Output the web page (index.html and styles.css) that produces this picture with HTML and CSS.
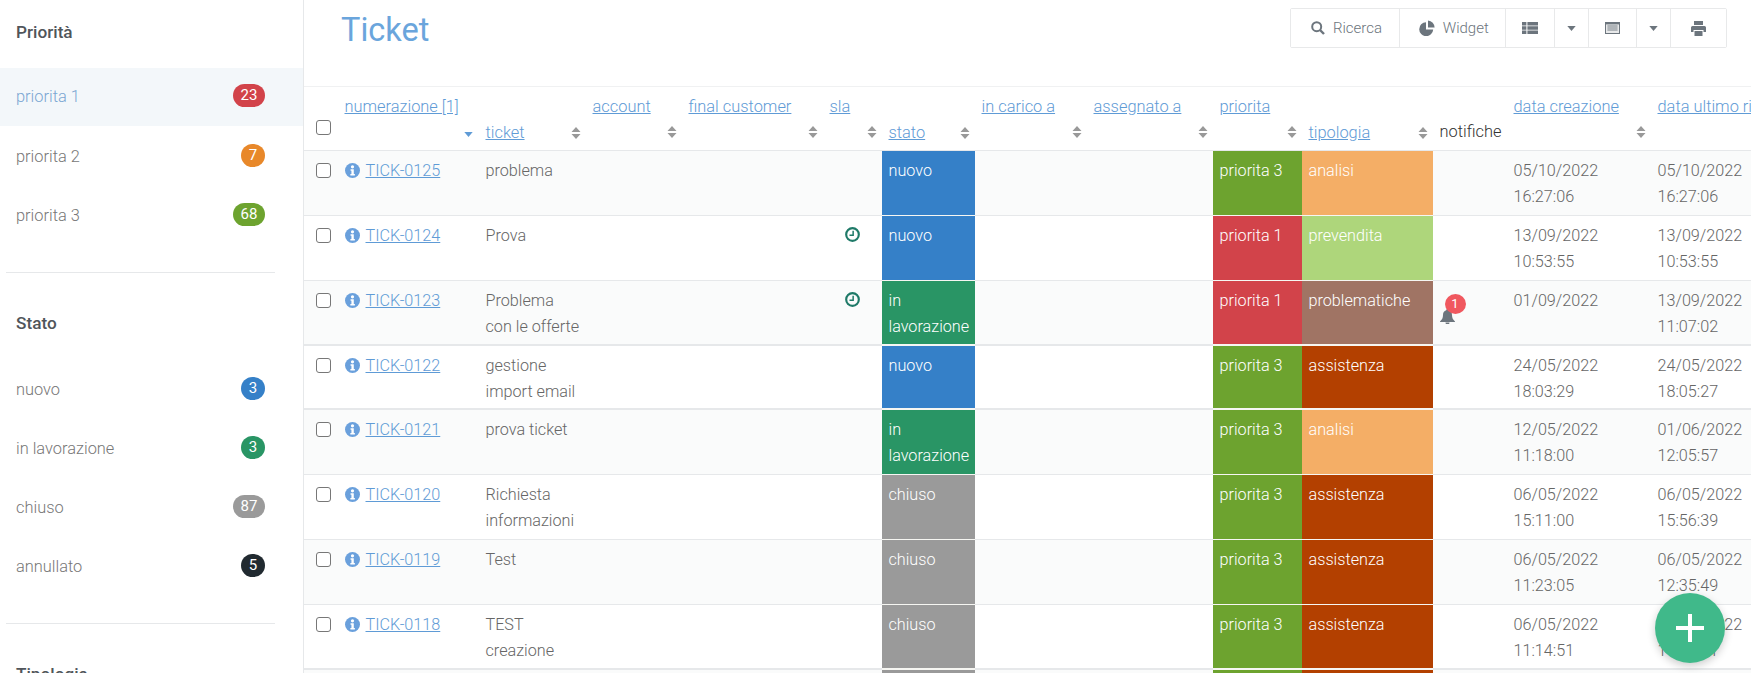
FILE: index.html
```html
<!DOCTYPE html>
<html lang="it">

<head>
    <meta charset="utf-8">
    <meta name="viewport" content="width=device-width, initial-scale=1.0">
    <title>Ticket</title>
    <link rel="stylesheet" href="styles.css">
</head>

<body>

    <!-- icone -->
    <svg class="nascosto" aria-hidden="true">
        <symbol id="i-info" viewBox="0 0 14 14">
            <circle cx="7" cy="7" r="7" fill="currentColor" />
            <circle cx="7" cy="3.6" r="1.5" fill="#fff" />
            <path d="M5.2 5.9h3v4.3h1v1.4H5v-1.4h1V7.3h-.8z" fill="#fff" />
        </symbol>
        <symbol id="i-sort" viewBox="0 0 10 12">
            <path d="M5 0l4.5 5H.5zM5 12L.5 7h9z" fill="currentColor" />
        </symbol>
        <symbol id="i-caret" viewBox="0 0 10 6">
            <path d="M0 0h10L5 6z" fill="currentColor" />
        </symbol>
        <symbol id="i-clock" viewBox="0 0 14 14">
            <circle cx="7" cy="7" r="5.9" fill="none" stroke="currentColor" stroke-width="2" />
            <path d="M7.6 3.6v4.2H4.2" fill="none" stroke="currentColor" stroke-width="1.4" />
        </symbol>
    </svg>

    <aside class="sidebar">
        <section class="gruppo">
            <h3>Priorità</h3>
            <a class="voce attiva" href="#">priorita 1 <span class="badge rosso">23</span></a>
            <a class="voce" href="#">priorita 2 <span class="badge arancio">7</span></a>
            <a class="voce" href="#">priorita 3 <span class="badge verde">68</span></a>
        </section>
        <section class="gruppo">
            <h3>Stato</h3>
            <a class="voce" href="#">nuovo <span class="badge blu">3</span></a>
            <a class="voce" href="#">in lavorazione <span class="badge smeraldo">3</span></a>
            <a class="voce" href="#">chiuso <span class="badge grigio">87</span></a>
            <a class="voce" href="#">annullato <span class="badge nero">5</span></a>
        </section>
        <section class="gruppo">
            <h3>Tipologia</h3>
        </section>
    </aside>

    <main class="contenuto">
        <header class="testata">
            <h1>Ticket</h1>
            <div class="toolbar">
                <button class="btn b-ricerca">
                    <svg width="14" height="14" viewBox="0 0 14 14">
                        <circle cx="5.7" cy="5.7" r="4.5" fill="none" stroke="currentColor" stroke-width="2" />
                        <path d="M9 9l4 4" stroke="currentColor" stroke-width="2.4" />
                    </svg>
                    Ricerca
                </button>
                <button class="btn b-widget">
                    <svg width="16" height="16" viewBox="0 0 16 16">
                        <path d="M7 2.2v7.4h7.2A7 7 0 1 1 7 2.2z" fill="currentColor" />
                        <path d="M9 .6a7 7 0 0 1 6.6 7H9z" fill="currentColor" />
                    </svg>
                    Widget
                </button>
                <button class="btn b-icona">
                    <svg width="16" height="12" viewBox="0 0 16 12" fill="currentColor">
                        <path d="M0 0h4.4v3.4H0zM5.4 0H16v3.4H5.4zM0 4.3h4.4v3.4H0zM5.4 4.3H16v3.4H5.4zM0 8.6h4.4V12H0zM5.4 8.6H16V12H5.4z" />
                    </svg>
                </button>
                <button class="btn b-caret">
                    <svg width="9" height="5"><use href="#i-caret" /></svg>
                </button>
                <button class="btn b-icona">
                    <svg width="15" height="12" viewBox="0 0 15 12">
                        <path d="M0 0h15v12H0z" fill="currentColor" />
                        <path d="M1 2.4h13V11H1z" fill="#e8e9ea" />
                        <path d="M2.4 4h10.2M2.4 6h10.2M2.4 8h10.2" stroke="currentColor" stroke-width=".9" />
                    </svg>
                </button>
                <button class="btn b-caret">
                    <svg width="9" height="5"><use href="#i-caret" /></svg>
                </button>
                <button class="btn b-stampa">
                    <svg width="15" height="15" viewBox="0 0 15 15" fill="currentColor">
                        <path d="M3 0h9v4H3zM1.500 5h12A1.500 1.500 0 0 1 15 6.500V11h-2.500V9h-10v2H0V6.500A1.500 1.500 0 0 1 1.500 5zM3.500 10h8v5h-8z" />
                    </svg>
                </button>
            </div>
        </header>

        <table class="tabella">
            <colgroup>
                <col class="c-spunta">
                <col class="c-num">
                <col class="c-ticket">
                <col class="c-account">
                <col class="c-final">
                <col class="c-sla">
                <col class="c-stato">
                <col class="c-carico">
                <col class="c-assegnato">
                <col class="c-priorita">
                <col class="c-tipologia">
                <col class="c-notifiche">
                <col class="c-creazione">
                <col class="c-ultimo">
            </colgroup>
            <thead>
                <tr>
                    <th><input class="spunta" type="checkbox"></th>
                    <th><a href="#">numerazione [1]</a>
                        <div class="riga-sort"><svg class="caret-attivo" width="9" height="5"><use href="#i-caret" /></svg></div>
                    </th>
                    <th class="bassa"><div class="riga-sort tra"><a href="#">ticket</a><svg class="sort" width="10" height="12"><use href="#i-sort" /></svg></div></th>
                    <th><a href="#">account</a>
                        <div class="riga-sort"><svg class="sort" width="10" height="12"><use href="#i-sort" /></svg></div>
                    </th>
                    <th><a href="#">final customer</a>
                        <div class="riga-sort"><svg class="sort" width="10" height="12"><use href="#i-sort" /></svg></div>
                    </th>
                    <th><a href="#">sla</a>
                        <div class="riga-sort"><svg class="sort" width="10" height="12"><use href="#i-sort" /></svg></div>
                    </th>
                    <th class="bassa"><div class="riga-sort tra"><a href="#">stato</a><svg class="sort" width="10" height="12"><use href="#i-sort" /></svg></div></th>
                    <th><a href="#">in carico a</a>
                        <div class="riga-sort"><svg class="sort" width="10" height="12"><use href="#i-sort" /></svg></div>
                    </th>
                    <th><a href="#">assegnato a</a>
                        <div class="riga-sort"><svg class="sort" width="10" height="12"><use href="#i-sort" /></svg></div>
                    </th>
                    <th><a href="#">priorita</a>
                        <div class="riga-sort"><svg class="sort" width="10" height="12"><use href="#i-sort" /></svg></div>
                    </th>
                    <th class="bassa"><div class="riga-sort tra"><a href="#">tipologia</a><svg class="sort" width="10" height="12"><use href="#i-sort" /></svg></div></th>
                    <th class="bassa notifiche">notifiche</th>
                    <th><a href="#">data creazione</a>
                        <div class="riga-sort"><svg class="sort" width="10" height="12"><use href="#i-sort" /></svg></div>
                    </th>
                    <th><a href="#">data ultimo riscontro</a></th>
                </tr>
            </thead>
            <tbody>
                <tr class="dispari">
                    <td><input class="spunta" type="checkbox"></td>
                    <td><svg class="info" width="15" height="15"><use href="#i-info" /></svg><a href="#">TICK-0125</a></td>
                    <td>problema</td>
                    <td></td>
                    <td></td>
                    <td></td>
                    <td class="cella blu">nuovo</td>
                    <td></td>
                    <td></td>
                    <td class="cella verde">priorita 3</td>
                    <td class="cella analisi">analisi</td>
                    <td></td>
                    <td>05/10/2022<br>16:27:06</td>
                    <td>05/10/2022<br>16:27:06</td>
                </tr>
                <tr>
                    <td><input class="spunta" type="checkbox"></td>
                    <td><svg class="info" width="15" height="15"><use href="#i-info" /></svg><a href="#">TICK-0124</a></td>
                    <td>Prova</td>
                    <td></td>
                    <td></td>
                    <td class="sla"><svg class="orologio" width="15" height="15"><use href="#i-clock" /></svg></td>
                    <td class="cella blu">nuovo</td>
                    <td></td>
                    <td></td>
                    <td class="cella rosso">priorita 1</td>
                    <td class="cella prevendita">prevendita</td>
                    <td></td>
                    <td>13/09/2022<br>10:53:55</td>
                    <td>13/09/2022<br>10:53:55</td>
                </tr>
                <tr class="dispari spessa">
                    <td><input class="spunta" type="checkbox"></td>
                    <td><svg class="info" width="15" height="15"><use href="#i-info" /></svg><a href="#">TICK-0123</a></td>
                    <td>Problema<br>con le offerte</td>
                    <td></td>
                    <td></td>
                    <td class="sla"><svg class="orologio" width="15" height="15"><use href="#i-clock" /></svg></td>
                    <td class="cella smeraldo">in lavorazione</td>
                    <td></td>
                    <td></td>
                    <td class="cella rosso">priorita 1</td>
                    <td class="cella problematiche">problematiche</td>
                    <td>
                        <span class="campana">
                            <svg width="15" height="15" viewBox="0 0 15 15" fill="currentColor">
                                <path d="M7.500 0a1.300 1.300 0 0 1 1.300 1.300C11 1.900 12 3.700 12 6c0 3 1 4.500 3 6.500V13H0v-.5C2 10.500 3 9 3 6c0-2.300 1-4.100 3.200-4.700A1.300 1.300 0 0 1 7.500 0zM5.500 13.600h4a2 2 0 0 1-4 0z" />
                            </svg>
                            <span class="pallino">1</span>
                        </span>
                    </td>
                    <td>01/09/2022</td>
                    <td>13/09/2022<br>11:07:02</td>
                </tr>
                <tr class="spessa corta">
                    <td><input class="spunta" type="checkbox"></td>
                    <td><svg class="info" width="15" height="15"><use href="#i-info" /></svg><a href="#">TICK-0122</a></td>
                    <td>gestione import email</td>
                    <td></td>
                    <td></td>
                    <td></td>
                    <td class="cella blu">nuovo</td>
                    <td></td>
                    <td></td>
                    <td class="cella verde">priorita 3</td>
                    <td class="cella assistenza">assistenza</td>
                    <td></td>
                    <td>24/05/2022<br>18:03:29</td>
                    <td>24/05/2022<br>18:05:27</td>
                </tr>
                <tr class="dispari">
                    <td><input class="spunta" type="checkbox"></td>
                    <td><svg class="info" width="15" height="15"><use href="#i-info" /></svg><a href="#">TICK-0121</a></td>
                    <td>prova ticket</td>
                    <td></td>
                    <td></td>
                    <td></td>
                    <td class="cella smeraldo">in lavorazione</td>
                    <td></td>
                    <td></td>
                    <td class="cella verde">priorita 3</td>
                    <td class="cella analisi">analisi</td>
                    <td></td>
                    <td>12/05/2022<br>11:18:00</td>
                    <td>01/06/2022<br>12:05:57</td>
                </tr>
                <tr>
                    <td><input class="spunta" type="checkbox"></td>
                    <td><svg class="info" width="15" height="15"><use href="#i-info" /></svg><a href="#">TICK-0120</a></td>
                    <td>Richiesta informazioni</td>
                    <td></td>
                    <td></td>
                    <td></td>
                    <td class="cella grigio">chiuso</td>
                    <td></td>
                    <td></td>
                    <td class="cella verde">priorita 3</td>
                    <td class="cella assistenza">assistenza</td>
                    <td></td>
                    <td>06/05/2022<br>15:11:00</td>
                    <td>06/05/2022<br>15:56:39</td>
                </tr>
                <tr class="dispari">
                    <td><input class="spunta" type="checkbox"></td>
                    <td><svg class="info" width="15" height="15"><use href="#i-info" /></svg><a href="#">TICK-0119</a></td>
                    <td>Test</td>
                    <td></td>
                    <td></td>
                    <td></td>
                    <td class="cella grigio">chiuso</td>
                    <td></td>
                    <td></td>
                    <td class="cella verde">priorita 3</td>
                    <td class="cella assistenza">assistenza</td>
                    <td></td>
                    <td>06/05/2022<br>11:23:05</td>
                    <td>06/05/2022<br>12:35:49</td>
                </tr>
                <tr class="spessa">
                    <td><input class="spunta" type="checkbox"></td>
                    <td><svg class="info" width="15" height="15"><use href="#i-info" /></svg><a href="#">TICK-0118</a></td>
                    <td>TEST creazione</td>
                    <td></td>
                    <td></td>
                    <td></td>
                    <td class="cella grigio">chiuso</td>
                    <td></td>
                    <td></td>
                    <td class="cella verde">priorita 3</td>
                    <td class="cella assistenza">assistenza</td>
                    <td></td>
                    <td>06/05/2022<br>11:14:51</td>
                    <td>06/05/2022<br>11:14:51</td>
                </tr>
                <tr class="dispari">
                    <td></td>
                    <td></td>
                    <td></td>
                    <td></td>
                    <td></td>
                    <td></td>
                    <td class="cella grigio"></td>
                    <td></td>
                    <td></td>
                    <td class="cella verde"></td>
                    <td class="cella assistenza"></td>
                    <td></td>
                    <td></td>
                    <td></td>
                </tr>
            </tbody>
        </table>
    </main>

    <button class="fab" aria-label="Nuovo ticket">
        <svg width="28" height="28" viewBox="0 0 28 28">
            <path d="M14 0v28M0 14h28" stroke="#fff" stroke-width="4" />
        </svg>
    </button>

</body>

</html>
```

FILE: styles.css
```css
body {
    margin: 0;
    height: 673px;
    overflow: hidden;
    display: flex;
    background-color: #fff;
    font-family: "Roboto", "Liberation Sans", sans-serif;
    font-size: 16.2px;
    font-weight: 300;
    line-height: 25.5px;
    color: #666;
}

a {
    color: #5f9bd6;
}

.nascosto {
    display: none;
}

/******************** sidebar ********************/

.sidebar {
    flex: 0 0 303px;
    height: 673px;
    overflow: hidden;
    border-right: 1px solid #e6e8ea;
}

.gruppo {
    margin: 0 28px 0 6px;
    padding: 37px 0 26.500px;
    border-bottom: 1px solid #e6e8ea;
}

.gruppo:first-child {
    padding-top: 19px;
}

.gruppo h3 {
    margin: 0 0 24px 10px;
    font-size: 17.200px;
    font-weight: 500;
    line-height: 26px;
    color: #50555a;
}

.gruppo:first-child h3 {
    margin-bottom: 23px;
}

.voce {
    display: flex;
    align-items: center;
    justify-content: space-between;
    height: 59px;
    margin: 0 -28px 0 -6px;
    padding: 0 38px 0 16px;
    font-size: 16.400px;
    color: #777;
    text-decoration: none;
}

.voce.attiva {
    height: 58px;
    margin-bottom: 1.500px;
    background-color: #f3f7fa;
    color: #7aa6d2;
}

.badge {
    display: block;
    min-width: 24px;
    height: 23px;
    margin-bottom: 3px;
    padding: 0 4px;
    box-sizing: border-box;
    border-radius: 12px;
    font-size: 15px;
    font-weight: 400;
    line-height: 22px;
    text-align: center;
    color: #fff;
}

.badge.rosso,
.badge.verde,
.badge.grigio {
    min-width: 32px;
}

.badge.arancio {
    background-color: #e8882a;
}

.badge.nero {
    background-color: #212a30;
}

.blu {
    background-color: #3580c8;
}

.smeraldo {
    background-color: #299565;
}

.grigio {
    background-color: #9a9a9a;
}

.verde {
    background-color: #6da32f;
}

.rosso {
    background-color: #d2434a;
}

.analisi {
    background-color: #f4ae66;
}

.prevendita {
    background-color: #aed67b;
}

.problematiche {
    background-color: #a07464;
}

.assistenza {
    background-color: #b34000;
}

/******************** testata ********************/

.contenuto {
    flex: 1 1 auto;
    min-width: 0;
    overflow: hidden;
}

.testata {
    display: flex;
    justify-content: space-between;
    align-items: flex-start;
    height: 87px;
    padding: 8px 24px 0 37px;
    box-sizing: border-box;
    border-bottom: 1px solid #f0f1f2;
}

.testata h1 {
    margin: 2px 0 0;
    font-size: 32.500px;
    font-weight: 400;
    line-height: 40px;
    color: #6aa5dc;
}

.toolbar {
    display: flex;
    height: 40px;
    box-sizing: border-box;
    border: 1px solid #e8e9ea;
    border-radius: 2px;
}

.btn {
    display: flex;
    align-items: center;
    justify-content: center;
    gap: 8px;
    padding: 0;
    border: 0;
    border-right: 1px solid #e8e9ea;
    background-color: #fff;
    font-family: inherit;
    font-size: 15px;
    font-weight: 300;
    color: #6c757d;
}

.btn:last-child {
    border-right: 0;
}

.b-ricerca {
    width: 109px;
    padding-left: 4px;
}

.b-widget {
    width: 106.500px;
    padding-left: 3px;
}

.b-icona {
    width: 48.500px;
}

.b-caret {
    width: 34px;
}

.b-stampa {
    width: 55px;
}

/******************** tabella ********************/

.tabella {
    table-layout: fixed;
    width: 1497px;
    border-collapse: separate;
    border-spacing: 0;
}

.c-spunta { width: 34px; }
.c-num { width: 141px; }
.c-ticket { width: 107px; }
.c-account { width: 96px; }
.c-final { width: 141px; }
.c-sla { width: 59px; }
.c-stato { width: 93px; }
.c-carico { width: 112px; }
.c-assegnato { width: 126px; }
.c-priorita { width: 89px; }
.c-tipologia { width: 131px; }
.c-notifiche { width: 74px; }
.c-creazione { width: 144px; }
.c-ultimo { width: 150px; }

.tabella th {
    height: 64px;
    box-sizing: border-box;
    padding: 8px 6.500px 0;
    border-bottom: 1px solid #e6e8ea;
    font-size: 16.400px;
    font-weight: 300;
    line-height: 24px;
    text-align: left;
    vertical-align: top;
    white-space: nowrap;
}

.tabella th.bassa {
    padding-top: 33px;
}

.tabella th:first-child {
    padding-top: 28px;
}

.tabella th.notifiche {
    color: #333;
}

.riga-sort {
    display: flex;
    justify-content: flex-end;
    align-items: center;
    height: 26px;
}

.riga-sort.tra {
    justify-content: space-between;
}

.sort {
    margin-right: -1px;
    color: #999;
}

.caret-attivo {
    margin: 4px 0 0;
    color: #5f9bd6;
}

.tabella td {
    height: 65px;
    box-sizing: border-box;
    padding: 7px 6.500px 0;
    border-bottom: 1px solid #e6e8ea;
    vertical-align: top;
}

.dispari td:not(.cella) {
    background-color: #fafbfb;
}

.spessa td {
    border-bottom-width: 2px;
}

.corta td {
    height: 64px;
}

.tabella td.cella {
    border-bottom-color: #f6f6f2;
    color: #fff;
}

.spunta {
    appearance: none;
    display: block;
    width: 15px;
    height: 15px;
    margin: 5px 0 0 5px;
    border: 1.500px solid #777;
    border-radius: 3px;
    background-color: #fff;
}

.info {
    margin-right: 6px;
    vertical-align: -2px;
    color: #6aa0dc;
}

.sla {
    text-align: right;
}

.orologio {
    display: inline-block;
    margin: 4px 16px 0 0;
    vertical-align: top;
    color: #1f7a68;
}

.campana {
    position: relative;
    display: block;
    width: 15px;
    height: 15px;
    margin-top: 21px;
    color: #6c757d;
}

.campana svg {
    display: block;
}

.pallino {
    position: absolute;
    left: 5px;
    top: -15px;
    width: 21px;
    height: 20px;
    border-radius: 50%;
    background-color: #f0585f;
    color: #fff;
    font-size: 13px;
    font-weight: 400;
    line-height: 20px;
    text-align: center;
}

/******************** bottone + ********************/

.fab {
    position: fixed;
    right: 26px;
    bottom: 10px;
    display: flex;
    align-items: center;
    justify-content: center;
    width: 70px;
    height: 70px;
    padding: 0;
    border: 0;
    border-radius: 50%;
    background-color: #40b98a;
    box-shadow: 0 3px 8px rgba(0, 0, 0, 0.2);
}
```
